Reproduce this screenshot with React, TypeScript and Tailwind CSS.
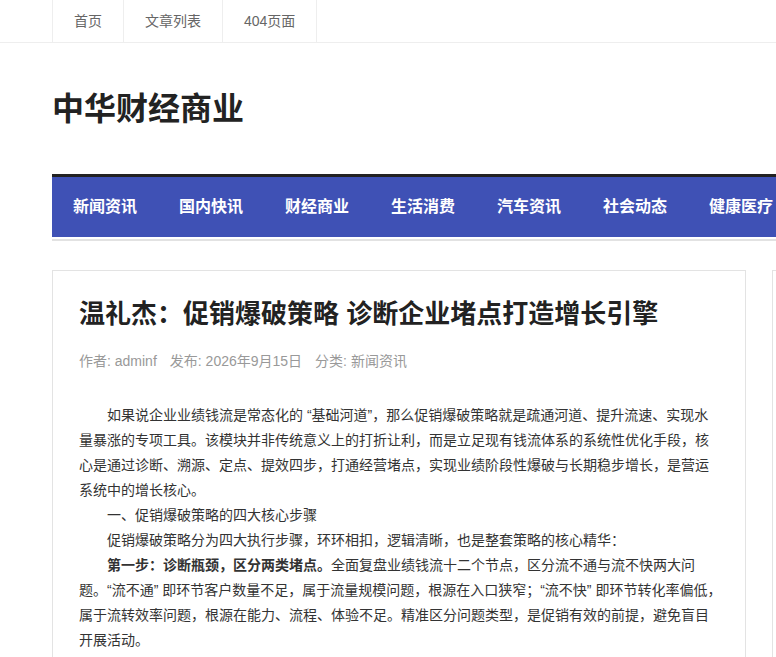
import React from 'react';

const font = { fontFamily: '"Liberation Sans", "Noto Sans CJK SC", sans-serif' };

const topLinks = ['首页', '文章列表', '404页面'];
const navItems = ['新闻资讯', '国内快讯', '财经商业', '生活消费', '汽车资讯', '社会动态', '健康医疗', '科技数码'];

export default function App() {
  return (
    <div className="h-[657px] w-[776px] overflow-hidden bg-white text-[#333]" style={font}>
      {/* top links */}
      <div className="border-b border-[#eee]">
        <div className="ml-[52px] flex h-[42px] w-[1200px]">
          <ul className="flex border-l border-[#eee]">
            {topLinks.map((t) => (
              <li key={t} className="flex items-center border-r border-[#eee] px-[21px] text-[14px] text-[#666]">
                {t}
              </li>
            ))}
          </ul>
        </div>
      </div>

      <div className="ml-[52px] w-[1200px]">
        {/* site title */}
        <div className="flex h-[131px] items-center">
          <h1 className="text-[32px] font-bold leading-none text-[#222]">中华财经商业</h1>
        </div>

        {/* main nav */}
        <nav className="border-t-[3px] border-[#222]">
          <ul className="flex h-[60px] items-center bg-[#3f51b5]">
            {navItems.map((n) => (
              <li key={n} className="px-[21px] text-[16px] font-bold text-white">
                {n}
              </li>
            ))}
          </ul>
          <div className="mt-[2px] h-[2px] bg-[#e2e2e2]" />
        </nav>

        {/* content */}
        <div className="mt-[29px] flex gap-[26px]">
          <article className="w-[694px] shrink-0 border border-[#e3e3e3] pb-6 pl-[26px] pr-[23px] pt-[25px]">
            <h2 className="text-[26px] font-bold leading-[36px] text-[#222]">
              温礼杰：促销爆破策略 诊断企业堵点打造增长引擎
            </h2>
            <div className="mt-[19px] flex gap-[13px] text-[14px] leading-[20px] text-[#999]">
              <span>作者: adminf</span>
              <span>发布: 2026年9月15日</span>
              <span>分类: 新闻资讯</span>
            </div>
            <div className="mt-[32px] text-[14px] leading-[25px] text-[#333]">
              <p className="indent-[2em]">
                如果说企业业绩钱流是常态化的 “基础河道”，那么促销爆破策略就是疏通河道、提升流速、实现水量暴涨的专项工具。该模块并非传统意义上的打折让利，而是立足现有钱流体系的系统性优化手段，核心是通过诊断、溯源、定点、提效四步，打通经营堵点，实现业绩阶段性爆破与长期稳步增长，是营运系统中的增长核心。
              </p>
              <p className="indent-[2em]">一、促销爆破策略的四大核心步骤</p>
              <p className="indent-[2em]">促销爆破策略分为四大执行步骤，环环相扣，逻辑清晰，也是整套策略的核心精华：</p>
              <p className="indent-[2em]">
                <strong className="font-bold">第一步：诊断瓶颈，区分两类堵点。</strong>
                全面复盘业绩钱流十二个节点，区分流不通与流不快两大问题。“流不通” 即环节客户数量不足，属于流量规模问题，根源在入口狭窄；“流不快” 即环节转化率偏低，属于流转效率问题，根源在能力、流程、体验不足。精准区分问题类型，是促销有效的前提，避免盲目开展活动。
              </p>
            </div>
          </article>
          <aside className="h-[800px] w-[480px] shrink-0 border border-[#e3e3e3]" />
        </div>
      </div>
    </div>
  );
}
